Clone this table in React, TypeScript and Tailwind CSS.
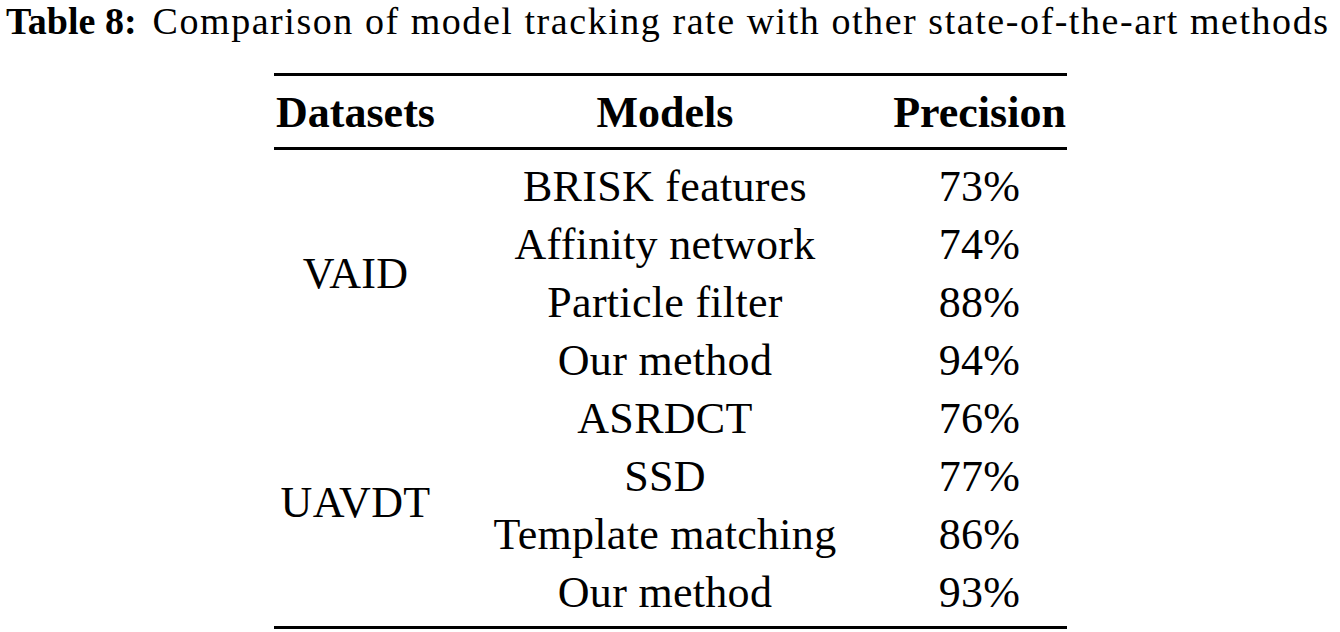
import React from 'react';

interface Row {
  model: string;
  precision: string;
}

const groups: { dataset: string; rows: Row[] }[] = [
  {
    dataset: 'VAID',
    rows: [
      { model: 'BRISK features', precision: '73%' },
      { model: 'Affinity network', precision: '74%' },
      { model: 'Particle filter', precision: '88%' },
      { model: 'Our method', precision: '94%' },
    ],
  },
  {
    dataset: 'UAVDT',
    rows: [
      { model: 'ASRDCT', precision: '76%' },
      { model: 'SSD', precision: '77%' },
      { model: 'Template matching', precision: '86%' },
      { model: 'Our method', precision: '93%' },
    ],
  },
];

const serif = "font-['Liberation_Serif','Times_New_Roman',serif]";

const App: React.FC = () => {
  return (
    <div className={`w-[1340px] h-[632px] bg-white text-black overflow-hidden ${serif}`}>
      {/* Caption */}
      <div className="pl-[6px] h-[42px] text-[38px] leading-[42px] whitespace-nowrap">
        <span className="font-bold">Table 8:</span>
        <span className="ml-[16px] tracking-[1.55px]">
          Comparison of model tracking rate with other state-of-the-art methods
        </span>
      </div>

      {/* Table */}
      <div className="mx-auto w-[793px] mt-[31px]">
        <div className="h-[3px] bg-black" />
        <div className="grid grid-cols-[164px_455px_174px] mt-[8px] text-[44px] leading-[58px] font-bold">
          <div className="text-center">Datasets</div>
          <div className="text-center">Models</div>
          <div className="text-center">Precision</div>
        </div>
        <div className="h-[3px] bg-black mt-[5px]" />
        <div className="grid grid-cols-[164px_455px_174px] mt-[8px] text-[44px] leading-[58px] tracking-[0.3px]">
          {groups.map((g) => (
            <React.Fragment key={g.dataset}>
              <div className="row-span-4 flex items-center justify-center">
                <span className={g.dataset === 'UAVDT' ? '-mt-[6px]' : ''}>{g.dataset}</span>
              </div>
              {g.rows.map((r, i) => (
                <React.Fragment key={g.dataset + i}>
                  <div className="col-start-2 text-center h-[58px]">{r.model}</div>
                  <div className="text-center h-[58px]">{r.precision}</div>
                </React.Fragment>
              ))}
            </React.Fragment>
          ))}
        </div>
        <div className="h-[3px] bg-black mt-[4px]" />
      </div>
    </div>
  );
};

export default App;
